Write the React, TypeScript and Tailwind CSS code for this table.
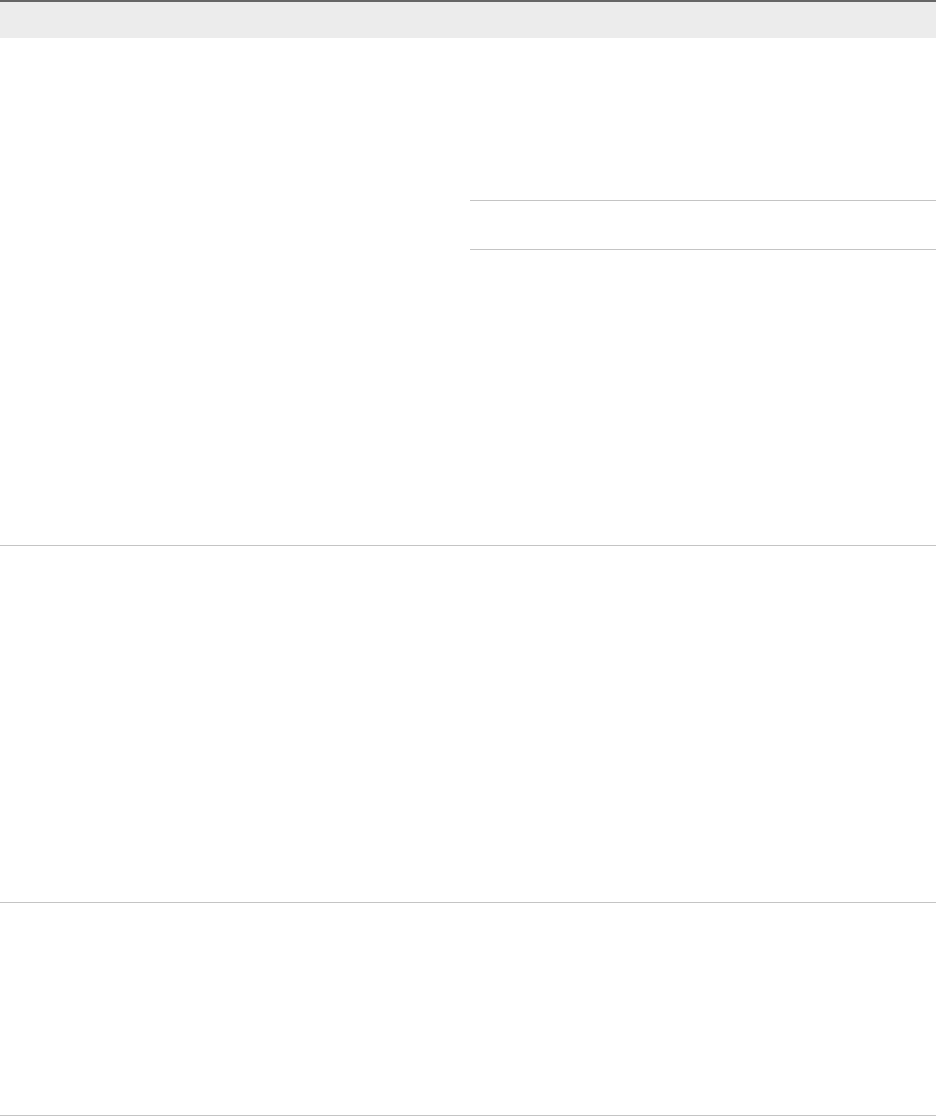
export default function App() {
  const rows = [
    { key: 'first', height: 'h-[508px]', nested: true },
    { key: 'second', height: 'h-[357px]', nested: false },
    { key: 'third', height: 'h-[213px]', nested: false },
  ];

  return (
    <div className="w-[936px] h-[1116px] bg-white overflow-hidden" style={{ fontFamily: '"Liberation Sans", Arial, sans-serif' }}>
      {/* Header */}
      <div className="h-[38px] border-t-2 border-[#666666] bg-[#ececec]" />

      {/* Body rows */}
      {rows.map((row) => (
        <div key={row.key} className={`flex ${row.height} border-b border-[#c4c4c4]`}>
          <div className="w-[470px]" />
          <div className="flex-1">
            {row.nested && (
              <div className="mt-[162px] h-[50px] border-y border-[#c4c4c4]" />
            )}
          </div>
        </div>
      ))}
    </div>
  );
}
